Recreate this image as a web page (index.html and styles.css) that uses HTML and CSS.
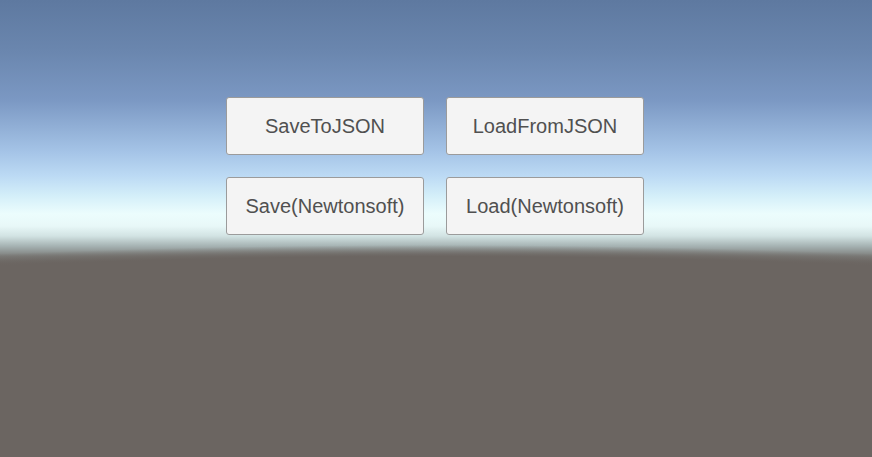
FILE: index.html
```html
<!DOCTYPE html>
<html>
<head>
<meta charset="utf-8">
<link rel="stylesheet" href="styles.css">
</head>
<body>
<main class="scene">
  <div class="panel">
    <button class="btn">SaveToJSON</button>
    <button class="btn">LoadFromJSON</button>
    <button class="btn">Save(Newtonsoft)</button>
    <button class="btn">Load(Newtonsoft)</button>
  </div>
</main>
</body>
</html>
```
FILE: styles.css
```css
html, body {
  margin: 0;
  padding: 0;
  width: 872px;
  height: 457px;
  overflow: hidden;
}

.scene {
  width: 872px;
  height: 457px;
  box-sizing: border-box;
  padding: 97px 0 0 226px;
  background:
    radial-gradient(ellipse 1600px 230px at 50% 475px, #6b6561 0, #6b6561 95%, rgba(107, 101, 97, 0) 100%),
    linear-gradient(to bottom,
      #5e79a0 0px,
      #6a86ae 50px,
      #7b98c3 100px,
      #a5c4e7 152px,
      #bcdaf4 176px,
      #d4eff9 196px,
      #ecfdfd 214px,
      #e8f8f8 226px,
      #d2e3e3 236px,
      #a6b3b3 246px,
      #7e7f7c 256px,
      #6b6561 266px,
      #6a6460 457px);
}

.panel {
  display: grid;
  grid-template-columns: 198px 198px;
  grid-auto-rows: 58px;
  gap: 22px;
}

.btn {
  box-sizing: border-box;
  margin: 0;
  padding: 0;
  border: 1px solid #9b9b9b;
  border-radius: 3px;
  background: #f4f4f4;
  color: #505050;
  font-family: "Liberation Sans", Arial, sans-serif;
  font-size: 20px;
  line-height: 1;
  text-align: center;
}
```
